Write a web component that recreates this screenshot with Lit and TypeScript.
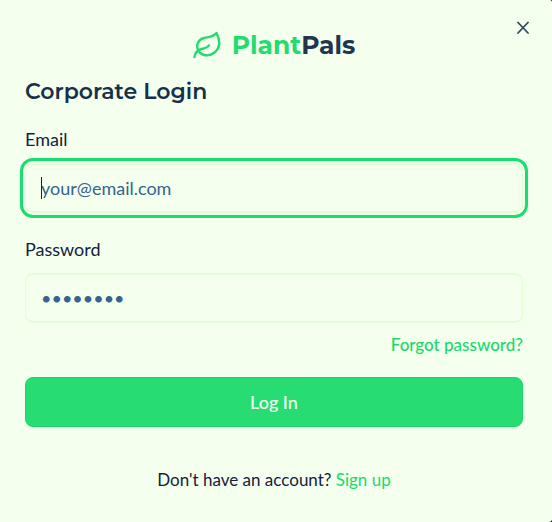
import { LitElement, html, css } from "lit";
import { customElement } from "lit/decorators.js";

@customElement("app-root")
export class AppRoot extends LitElement {
  static styles = css`
    :host {
      display: block;
      background: #000;
      color: #14213d;
      font: 18px/24px Lato, "Open Sans", sans-serif;
    }
    * {
      box-sizing: border-box;
    }
    .dialog {
      position: relative;
      min-height: 100vh;
      padding: 28px 29px 28px 25px;
      background: #f4ffee;
      border-radius: 0 2px 3px 0;
    }
    .close {
      position: absolute;
      top: 16px;
      right: 17px;
      width: 24px;
      height: 24px;
      padding: 0;
      border: 0;
      background: none;
      color: #2f4a5e;
    }
    .close svg,
    .brand svg {
      display: block;
    }
    .brand {
      display: flex;
      align-items: center;
      justify-content: center;
      gap: 11px;
      height: 34px;
      font: 700 25px/34px Montserrat, Inter, sans-serif;
      color: #22344e;
    }
    .green {
      color: #24db70;
    }
    h1 {
      margin: 14px 0 19px;
      font: 600 22px/32px Montserrat, Inter, sans-serif;
      color: #17304a;
    }
    .field {
      display: flex;
      flex-direction: column;
      gap: 12px;
      margin-bottom: 24px;
    }
    .field.last {
      margin-bottom: 10px;
    }
    .box {
      position: relative;
    }
    input {
      display: block;
      width: 100%;
      height: 50px;
      padding: 0 15px;
      border: solid #e0ffd3;
      border-width: 2px 1px;
      border-radius: 8px;
      outline: 0;
      background: transparent;
      font: inherit;
      color: #467099;
    }
    input::placeholder {
      color: #366490;
      opacity: 1;
    }
    .active input {
      outline: 3px solid #18dd70;
      outline-offset: 2px;
    }
    .caret {
      position: absolute;
      left: 16px;
      top: 14px;
      width: 1px;
      height: 22px;
      background: #14213d;
    }
    a {
      color: #18da6c;
      text-decoration: none;
    }
    .forgot {
      display: flex;
      justify-content: flex-end;
      font-size: 17px;
      font-weight: 500;
    }
    .submit {
      display: block;
      width: 100%;
      height: 50px;
      margin: 20px 0 41px;
      border: 1px solid #10d964;
      border-radius: 8px;
      background: #28dc74;
      color: #f4ffee;
      font: inherit;
      font-weight: 500;
    }
    .signup {
      margin: 0;
      font-size: 17px;
      text-align: center;
    }
  `;

  render() {
    return html`
      <main class="dialog">
        <button class="close" type="button" aria-label="Close">
          <svg width="24" height="24" viewBox="0 0 24 24" fill="none" stroke="currentColor" stroke-width="1.8" stroke-linecap="round">
            <path d="M7 6.500 17 17M17 6.500 7 17" />
          </svg>
        </button>
        <div class="brand">
          <svg width="28" height="28" viewBox="0 0 28 28" fill="none" stroke="#24db70" stroke-width="2.4" stroke-linecap="round" stroke-linejoin="round">
            <path d="M1.500 26C2 21 6 18.500 10.500 17.500C13 17 14.800 15.800 16 14.500" />
            <path d="M5.500 20C2.500 14.500 5 8.500 11 7C16 5.800 20.500 6 23.500 2C27.500 10 27 17 21.500 21.500C16.500 25.500 9.500 25.500 5.500 20Z" />
          </svg>
          <span><span class="green">Plant</span>Pals</span>
        </div>
        <h1>Corporate Login</h1>
        <form @submit=${(e: Event) => e.preventDefault()}>
          <div class="field active">
            <label for="email">Email</label>
            <div class="box">
              <input id="email" type="email" placeholder="your@email.com" />
              <span class="caret"></span>
            </div>
          </div>
          <div class="field last">
            <label for="password">Password</label>
            <input id="password" type="password" placeholder="••••••••" />
          </div>
          <div class="forgot"><a href="#forgot">Forgot password?</a></div>
          <button class="submit" type="submit">Log In</button>
        </form>
        <p class="signup">Don't have an account? <a href="#signup">Sign up</a></p>
      </main>
    `;
  }
}
